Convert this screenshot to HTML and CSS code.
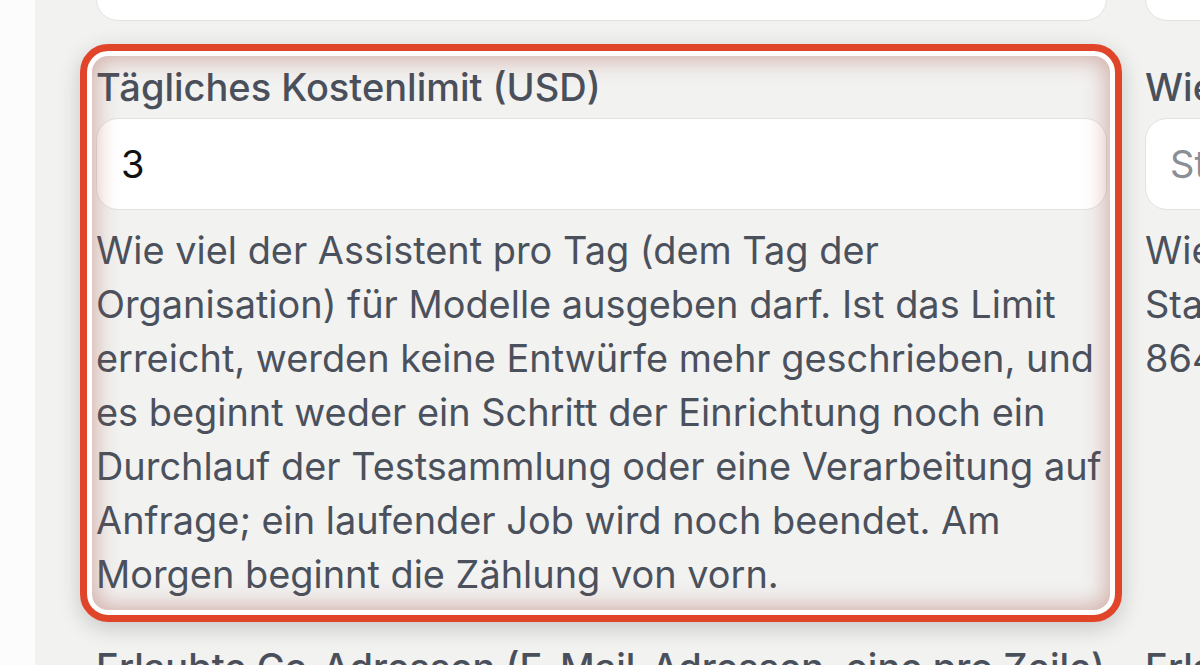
FILE: index.html
```html
<!DOCTYPE html>
<html lang="de">
<head>
<meta charset="utf-8">
<title>Einstellungen</title>
<link rel="stylesheet" href="styles.css">
</head>
<body>
<div class="rail"></div>
<main class="panel">
  <div class="grid">
    <div class="field">
      <label class="label">Absendername</label>
      <div class="input"></div>
    </div>
    <div class="field">
      <label class="label">Antwortadresse</label>
      <div class="input"></div>
    </div>

    <div class="field focus">
      <label class="label">Tägliches Kostenlimit (USD)</label>
      <div class="input"><span class="value">3</span></div>
      <p class="help">Wie viel der Assistent pro Tag (dem Tag der<br>Organisation) für Modelle ausgeben darf. Ist das Limit<br>erreicht, werden keine Entwürfe mehr geschrieben, und<br>es beginnt weder ein Schritt der Einrichtung noch ein<br>Durchlauf der Testsammlung oder eine Verarbeitung auf<br>Anfrage; ein laufender Job wird noch beendet. Am<br>Morgen beginnt die Zählung von vorn.</p>
      <div class="highlight"></div>
    </div>
    <div class="field">
      <label class="label">Wiederholungsfenster (Sekunden)</label>
      <div class="input"><span class="placeholder">Standard: 86400</span></div>
      <p class="help">Wie lange nach einem Fehler ein erneuter Versuch erlaubt ist.<br>Standard ist ein Tag, also<br>86400 Sekunden.</p>
    </div>

    <div class="field">
      <label class="label">Erlaubte Cc-Adressen (E-Mail-Adressen, eine pro Zeile)</label>
    </div>
    <div class="field">
      <label class="label">Erlaubte Bcc-Adressen (E-Mail-Adressen, eine pro Zeile)</label>
    </div>
  </div>
</main>
</body>
</html>
```
FILE: styles.css
```css
html, body {
  margin: 0;
  height: 100%;
  overflow: hidden;
}

body {
  display: flex;
  background: #fcfcfc;
  font-family: "Inter", "Noto Sans", sans-serif;
  color: #4a505b;
}

.rail {
  width: 35px;
  flex: none;
}

.panel {
  flex: 1;
  background: #f2f2f1;
  padding-left: 61px;
  min-width: 0;
}

.grid {
  display: grid;
  grid-template-columns: 1011px 1011px;
  column-gap: 38px;
  row-gap: 43px;
  margin-top: -125px;
}

.field {
  position: relative;
  display: flex;
  flex-direction: column;
}

.label {
  display: block;
  font-size: 38px;
  font-weight: 500;
  line-height: 46px;
  white-space: nowrap;
  color: #4a505b;
}

.input {
  margin-top: 8px;
  height: 92px;
  box-sizing: border-box;
  background: #ffffff;
  border: 1.5px solid #e2e2df;
  border-radius: 22px;
  padding-left: 24px;
  display: flex;
  align-items: center;
  font-size: 38px;
}

.value {
  color: #111111;
}

.placeholder {
  color: #8a8e96;
  white-space: nowrap;
}

.help {
  margin: 13px 0 0;
  font-size: 37.9px;
  line-height: 54px;
  white-space: nowrap;
  color: #4b515c;
}

.highlight {
  position: absolute;
  top: -20px;
  right: -15px;
  bottom: -21px;
  left: -16px;
  border: 7px solid #e0452a;
  border-radius: 28px;
  pointer-events: none;
  box-shadow:
    0 6px 22px rgba(0, 0, 0, 0.18),
    inset 0 0 0 5px #ffffff,
    inset 0 0 22px 9px rgba(160, 72, 56, 0.38);
}
```
